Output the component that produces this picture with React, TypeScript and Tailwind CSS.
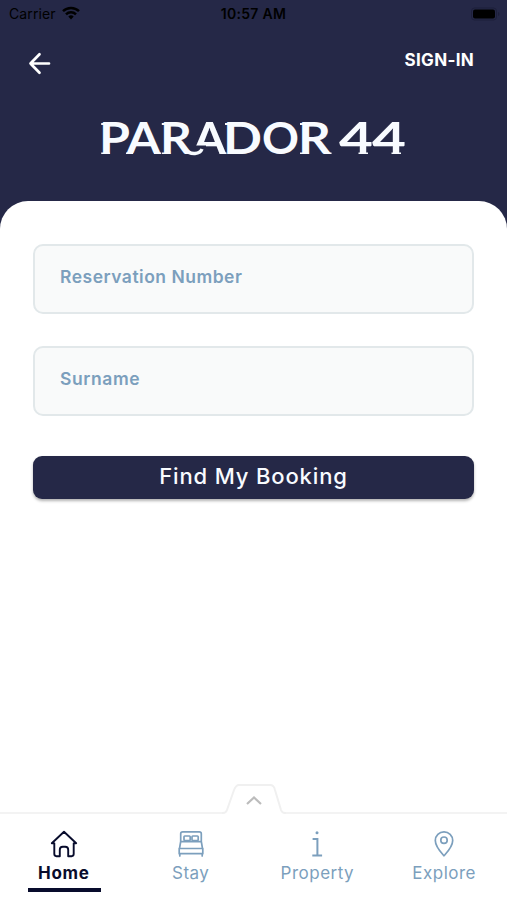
import { clsx } from "clsx";
import type { ReactNode } from "react";

interface Tab {
  label: string;
  icon: ReactNode;
  spacing: string;
}

const HomeIcon = () => (
  <svg viewBox="0 0 28 28" className="h-7 w-7" fill="none" stroke="currentColor" strokeWidth="1.9" strokeLinejoin="round" strokeLinecap="round">
    <path d="M1.8 13.2 14 1.8l12.2 11.4h-2.5v10.9q0 2.1-2.1 2.1h-3.4v-6.4q0-3-3-3h-2.4q-3 0-3 3v6.4H6.4q-2.1 0-2.1-2.1V13.2z" />
  </svg>
);

const BedIcon = () => (
  <svg viewBox="0 0 28 28" className="h-7 w-7" fill="none" stroke="currentColor" strokeWidth="1.7" strokeLinejoin="round" strokeLinecap="round">
    <path d="M3.7 11.5V3.8q0-2 2-2h16.6q2 0 2 2v7.7M3.7 11.5 2.6 18M24.3 11.5 25.4 18M4 11.6h20" />
    <rect x="7" y="6" width="6.2" height="4.6" rx="0.8" />
    <rect x="15" y="6" width="6.2" height="4.6" rx="0.8" />
    <path d="M2.2 18.5h23.6v5.2H2.2zM2.8 23.7v2.2M25.2 23.7v2.2" />
  </svg>
);

const InfoIcon = () => (
  <svg viewBox="0 0 28 28" className="h-7 w-7" fill="none" stroke="currentColor" strokeWidth="2">
    <path d="M9.6 9h4.8v16.4M9.3 25.6h9.8" />
    <circle cx="14" cy="2.7" r="1.5" fill="currentColor" stroke="none" />
  </svg>
);

const PinIcon = () => (
  <svg viewBox="0 0 28 28" className="h-7 w-7" fill="none" stroke="currentColor" strokeWidth="1.7" strokeLinejoin="round">
    <path d="M14 25.8C10.2 21.5 5.3 16.4 5.3 10.4a8.7 8.6 0 0 1 17.4 0c0 6-4.9 11.1-8.7 15.4z" />
    <circle cx="14" cy="10.2" r="3.2" />
  </svg>
);

const tabs: Tab[] = [
  { label: "Home", icon: <HomeIcon />, spacing: "tracking-[0.7px]" },
  { label: "Stay", icon: <BedIcon />, spacing: "tracking-[0.4px]" },
  { label: "Property", icon: <InfoIcon />, spacing: "tracking-[0.5px]" },
  { label: "Explore", icon: <PinIcon />, spacing: "tracking-[0.5px]" },
];

function StatusBar() {
  return (
    <div className="grid h-7 grid-cols-3 items-center px-[9px] text-black">
      <div className="flex items-center gap-[6px]">
        <span className="text-[14px] leading-5 tracking-[0.1px]">Carrier</span>
        <svg viewBox="0 0 18 14" className="mb-[2px] h-[14px] w-[18px]" fill="none" stroke="currentColor" strokeWidth="2.5">
          <path d="M1 5.2a11.5 11.5 0 0 1 16 0M4 8.3a7.2 7.2 0 0 1 10 0" />
          <path d="m9 13.5-2.7-3a4 4 0 0 1 5.4 0z" fill="currentColor" stroke="none" />
        </svg>
      </div>
      <span className="pb-[2px] text-center text-[14px] font-semibold tracking-[0.3px] whitespace-nowrap">10:57 AM</span>
      <svg viewBox="0 0 30 14" className="h-[14px] w-[30px] translate-x-[2px] justify-self-end">
        <rect x="1.5" y="1" width="25" height="12" rx="3" fill="none" stroke="#1d1f3a" />
        <rect x="3" y="2.5" width="22" height="9" rx="2" />
        <path d="M28 5v4q1.5-.5 1.5-2T28 5" fill="#1d1f3a" />
      </svg>
    </div>
  );
}

function Logo() {
  return (
    <svg viewBox="0 0 308 60" className="h-[60px] w-[308px]" fill="#f8fbff">
      <defs>
        {/* leaves out the left foot of the second A, above the R's tail */}
        <mask id="short-leg" maskUnits="userSpaceOnUse" x="85" y="0" width="50" height="60">
          <rect x="85" width="50" height="60" fill="white" />
          <path d="M85 35.5h21V47H85z" fill="black" />
        </mask>
      </defs>
      <g fontFamily="Lato, sans-serif" fontSize="43" fontWeight="700">
        <text x="-1" y="44" textLength="31" lengthAdjust="spacingAndGlyphs">P</text>
        <text x="26.5" y="44" textLength="34" lengthAdjust="spacingAndGlyphs">A</text>
        <text x="60" y="44" textLength="32" lengthAdjust="spacingAndGlyphs">R</text>
        <text x="93" y="44" textLength="33" lengthAdjust="spacingAndGlyphs" mask="url(#short-leg)">A</text>
        <text x="123" y="44" textLength="39" lengthAdjust="spacingAndGlyphs">D</text>
        <text x="162" y="44" textLength="37" lengthAdjust="spacingAndGlyphs">O</text>
        <text x="198" y="44" textLength="33" lengthAdjust="spacingAndGlyphs">R</text>
        <text x="239" y="44" textLength="34" lengthAdjust="spacingAndGlyphs">4</text>
        <text x="272" y="44" textLength="34" lengthAdjust="spacingAndGlyphs">4</text>
      </g>
      <g fill="none" stroke="#f8fbff">
        {/* tail of the first R, curling up under the A */}
        <path d="M84 38.5q5 5.5 11 5 5.5-.5 7-4.5" strokeWidth="3.4" />
        {/* cap terminals */}
        <path d="M1.2 14h5M61.8 14h5M125 14h5M200 14h5" strokeWidth="1.8" />
        {/* foot terminals */}
        <path d="M1.2 43.2h8.6M26 43.2h7M54 43.2h7M61.8 43.2h8.6M119.5 43.2h7M200 43.2h8.6M225 43.2h6.5M258.5 43.2h9.5M291.5 43.2h9.5" strokeWidth="1.6" />
      </g>
    </svg>
  );
}

function Field({ label, spacing }: { label: string; spacing: string }) {
  return (
    <label className="flex h-[70px] items-center rounded-[10px] border-2 border-[#e2e8ea] bg-[#f9fafa] px-[25px] pb-[3px]">
      <span className={clsx("text-[17.5px] font-semibold text-[#7c9fbd]", spacing)}>{label}</span>
    </label>
  );
}

function TabBar() {
  return (
    <nav className="relative h-[88px] border-t-2 border-[#f3f3f3] bg-white">
      <svg viewBox="0 0 64 32" className="absolute -top-[31px] left-[222px] h-8 w-16" fill="none">
        <path d="M0 30h1q3 0 4-3l7-20q2-5 5-5h31q4 0 5 5l6 20q1 3 4 3h1v3H0z" fill="#fff" />
        <path d="M0 30h1q3 0 4-3l7-20q2-5 5-5h31q4 0 5 5l6 20q1 3 4 3h1" stroke="#f0f0f0" strokeWidth="2" />
        <path d="m25 21 7-6.5 7 6.5" stroke="#bcbcbc" strokeWidth="2.2" />
      </svg>
      <div className="grid grid-cols-4 pt-4">
        {tabs.map((tab, i) => (
          <a
            key={tab.label}
            className={clsx(
              "flex flex-col items-center pl-px text-[17px]",
              i === 0 ? "font-bold text-[#080c2c]" : "text-[#7c9fbd]"
            )}
          >
            {tab.icon}
            <span className={clsx("mt-[3px] leading-6", tab.spacing)}>{tab.label}</span>
            {i === 0 && <span className="mt-[3px] ml-px h-[4px] w-[73px] bg-[#080c2c]" />}
          </a>
        ))}
      </div>
    </nav>
  );
}

export default function App() {
  return (
    <div className="flex h-[900px] w-[507px] flex-col overflow-hidden bg-[#252847] font-['Inter',sans-serif]">
      <header className="h-[201px] shrink-0">
        <StatusBar />
        <div className="flex items-start justify-between pt-[18px] pr-[33px] pl-7">
          <svg viewBox="0 0 24 24" className="mt-[5px] h-6 w-6" fill="none" stroke="white" strokeWidth="2.7" strokeLinecap="round" strokeLinejoin="round">
            <path d="M21 12.5H2.5M11.5 3.2l-9 9.3 9 9.3" />
          </svg>
          <span className="text-[17px] leading-7 font-bold tracking-[0.3px] text-white">SIGN-IN</span>
        </div>
        <div className="mt-[35px] flex justify-center">
          <Logo />
        </div>
      </header>

      <main className="flex flex-1 flex-col rounded-t-[28px] bg-white">
        <form className="flex flex-1 flex-col px-[33px] pt-[43px]">
          <Field label="Reservation Number" spacing="tracking-[0.5px]" />
          <div className="mt-8">
            <Field label="Surname" spacing="tracking-[0.6px]" />
          </div>
          <button
            type="button"
            className="mt-[39.5px] h-[43.5px] rounded-[9px] bg-[#252847] pb-[2px] text-[22px] font-medium tracking-[0.85px] text-[#f8fbff] shadow-[0_2px_3px_rgba(0,0,0,0.3)]"
          >
            Find My Booking
          </button>
        </form>
        <TabBar />
      </main>
    </div>
  );
}
